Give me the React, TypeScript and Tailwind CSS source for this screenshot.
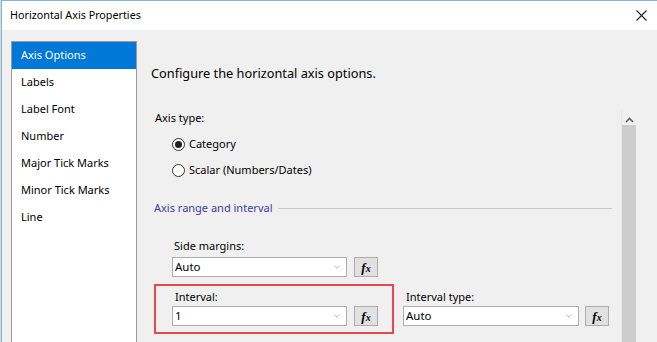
import { ChevronDown } from 'lucide-react';

const navItems = ['Axis Options', 'Labels', 'Label Font', 'Number', 'Major Tick Marks', 'Minor Tick Marks', 'Line'];

function Select({ value, width }: { value: string; width: string }) {
    return (
        <div className={`flex h-[20px] ${width} items-center justify-between border border-[#adadad] bg-white pr-[4px] pl-[2px]`}>
            <span className="text-[11.5px] leading-none text-black">{value}</span>
            <ChevronDown className="h-[10px] w-[10px] text-[#8a8a8a]" strokeWidth={1.5} />
        </div>
    );
}

function FxButton() {
    return (
        <div className="flex h-[20px] w-[24px] items-center justify-center border border-[#adadad] bg-[#e1e1e1]">
            <span className="font-['Liberation_Serif',serif] text-[13px] leading-none font-bold italic text-black">
                f<span className="text-[10px]">x</span>
            </span>
        </div>
    );
}

function Radio({ label, checked }: { label: string; checked?: boolean }) {
    return (
        <div className="flex h-[16px] items-center pl-[35px]">
            <div className="flex h-[13px] w-[13px] items-center justify-center rounded-full border border-[#333] bg-white">
                {checked && <div className="h-[7px] w-[7px] rounded-full bg-[#222]" />}
            </div>
            <span className="ml-[4px] text-[11px] leading-[16px] text-black">{label}</span>
        </div>
    );
}

export default function App() {
    return (
        <div className="flex h-[342px] w-[657px] overflow-hidden bg-[#d9d9d2] font-['Noto_Sans',sans-serif]">
            <div className="w-[1px] shrink-0" />
            <div className="flex flex-1 flex-col border-t border-l border-[#7fb4e6] bg-[#f0f0f0]">
                {/* Title bar */}
                <div className="flex h-[29px] shrink-0 items-center justify-between bg-white pr-[10px] pl-[8px]">
                    <span className="text-[10.75px] text-black">Horizontal Axis Properties</span>
                    <svg width="11" height="11" viewBox="0 0 11 11" className="text-[#222]">
                        <path d="M0.5 0.5 L10.5 10.5 M10.5 0.5 L0.5 10.5" stroke="currentColor" strokeWidth="1.1" />
                    </svg>
                </div>

                <div className="flex flex-1">
                    {/* Left navigation list */}
                    <div className="mt-[11px] ml-[9px] w-[126px] shrink-0 border-t border-r border-l border-[#9c9c9c] bg-white">
                        {navItems.map((item, i) => (
                            <div
                                key={item}
                                className={`flex h-[27px] items-center pl-[9px] text-[11px] ${i === 0 ? 'bg-[#0078d7] text-white' : 'text-black'}`}
                            >
                                {item}
                            </div>
                        ))}
                    </div>

                    {/* Right pane */}
                    <div className="flex flex-1 flex-col">
                        <div className="mt-[33px] pl-[14px] text-[12.75px] leading-[20px] text-black">
                            Configure the horizontal axis options.
                        </div>

                        <div className="mt-[27px] mr-[21px] flex flex-1">
                            <div className="flex flex-1 flex-col">
                                <div className="pl-[18px] text-[11px] leading-[16px] text-black">Axis type:</div>
                                <div className="mt-[10px]">
                                    <Radio label="Category" checked />
                                </div>
                                <div className="mt-[10px]">
                                    <Radio label="Scalar (Numbers/Dates)" />
                                </div>

                                <div className="mt-[22px] flex items-center pr-[9px] pl-[17px]">
                                    <span className="text-[11px] leading-[16px] text-[#3c3ca6]">Axis range and interval</span>
                                    <div className="ml-[6px] h-[1px] flex-1 bg-[#c8c8c8]" />
                                </div>

                                <div className="mt-[22px] pl-[37px] text-[11px] leading-[16px] text-black">Side margins:</div>
                                <div className="mt-[3px] flex gap-[7px] pl-[35px]">
                                    <Select value="Auto" width="w-[175px]" />
                                    <FxButton />
                                </div>

                                <div className="mt-[7px] flex items-start pl-[17px]">
                                    <div className="h-[50px] w-[240px] border-2 border-[#e8474b] pt-[3px] pl-[16px]">
                                        <div className="ml-[3px] text-[11px] leading-[16px] text-black">Interval:</div>
                                        <div className="mt-[1px] flex gap-[7px]">
                                            <Select value="1" width="w-[175px]" />
                                            <FxButton />
                                        </div>
                                    </div>
                                    <div className="ml-[9px] pt-[5px]">
                                        <div className="ml-[3px] text-[11px] leading-[16px] text-black">Interval type:</div>
                                        <div className="mt-[1px] flex gap-[6px]">
                                            <Select value="Auto" width="w-[176px]" />
                                            <FxButton />
                                        </div>
                                    </div>
                                </div>
                            </div>

                            {/* Scrollbar */}
                            <div className="flex w-[15px] flex-col border-l border-[#e6e6e6]">
                                <div className="flex h-[15px] items-end justify-center pb-[2px]">
                                    <svg width="9" height="6" viewBox="0 0 9 6">
                                        <path d="M1 5 L4.5 1.5 L8 5" stroke="#606060" strokeWidth="1.6" fill="none" />
                                    </svg>
                                </div>
                                <div className="flex-1 bg-[#cdcdcd]" />
                            </div>
                        </div>
                    </div>
                </div>
            </div>
        </div>
    );
}
